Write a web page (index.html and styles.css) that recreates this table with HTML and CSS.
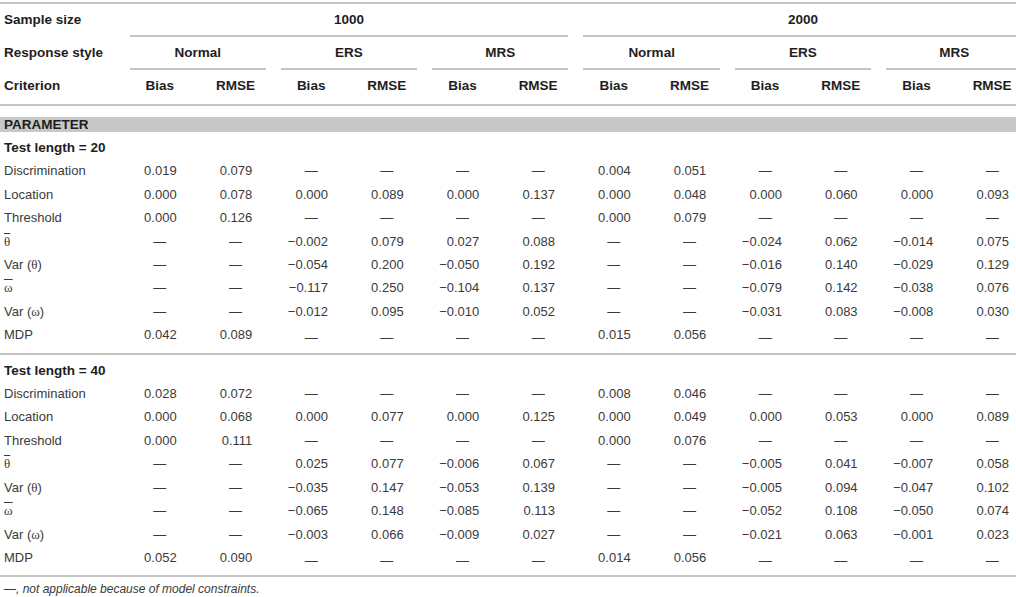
FILE: index.html
```html
<!DOCTYPE html>
<html>
<head>
<meta charset="utf-8">
<link rel="stylesheet" href="styles.css">
</head>
<body>
<div class="wrap">
<table class="tbl">
<colgroup>
<col class="c-lab">
<col class="c"><col class="c"><col class="c"><col class="c"><col class="c"><col class="c">
<col class="c"><col class="c"><col class="c"><col class="c"><col class="c"><col class="c">
</colgroup>
<thead>
<tr class="h1">
<th class="lab">Sample size</th>
<th class="grp" colspan="6"><div class="ul">1000</div></th>
<th class="grp" colspan="6"><div class="ul">2000</div></th>
</tr>
<tr class="h2">
<th class="lab">Response style</th>
<th class="grp" colspan="2"><div class="ul">Normal</div></th>
<th class="grp" colspan="2"><div class="ul">ERS</div></th>
<th class="grp" colspan="2"><div class="ul">MRS</div></th>
<th class="grp" colspan="2"><div class="ul">Normal</div></th>
<th class="grp" colspan="2"><div class="ul">ERS</div></th>
<th class="grp" colspan="2"><div class="ul">MRS</div></th>
</tr>
<tr class="h3">
<th class="lab">Criterion</th>
<th>Bias</th><th>RMSE</th><th>Bias</th><th>RMSE</th><th>Bias</th><th>RMSE</th>
<th>Bias</th><th>RMSE</th><th>Bias</th><th>RMSE</th><th>Bias</th><th>RMSE</th>
</tr>
</thead>
<tbody>
<tr class="gap"><td colspan="13"></td></tr>
<tr class="band"><td colspan="13">PARAMETER</td></tr>
<tr class="sub"><td colspan="13">Test length = 20</td></tr>
<tr><td class="lab">Discrimination</td><td>0.019</td><td>0.079</td><td class="d">—</td><td class="d">—</td><td class="d">—</td><td class="d">—</td><td>0.004</td><td>0.051</td><td class="d">—</td><td class="d">—</td><td class="d">—</td><td class="d">—</td></tr>
<tr><td class="lab">Location</td><td>0.000</td><td>0.078</td><td>0.000</td><td>0.089</td><td>0.000</td><td>0.137</td><td>0.000</td><td>0.048</td><td>0.000</td><td>0.060</td><td>0.000</td><td>0.093</td></tr>
<tr><td class="lab">Threshold</td><td>0.000</td><td>0.126</td><td class="d">—</td><td class="d">—</td><td class="d">—</td><td class="d">—</td><td>0.000</td><td>0.079</td><td class="d">—</td><td class="d">—</td><td class="d">—</td><td class="d">—</td></tr>
<tr><td class="lab"><span class="gk bar">θ</span></td><td class="d">—</td><td class="d">—</td><td>−0.002</td><td>0.079</td><td>0.027</td><td>0.088</td><td class="d">—</td><td class="d">—</td><td>−0.024</td><td>0.062</td><td>−0.014</td><td>0.075</td></tr>
<tr><td class="lab">Var (<span class="gk">θ</span>)</td><td class="d">—</td><td class="d">—</td><td>−0.054</td><td>0.200</td><td>−0.050</td><td>0.192</td><td class="d">—</td><td class="d">—</td><td>−0.016</td><td>0.140</td><td>−0.029</td><td>0.129</td></tr>
<tr><td class="lab"><span class="gk bar">ω</span></td><td class="d">—</td><td class="d">—</td><td>−0.117</td><td>0.250</td><td>−0.104</td><td>0.137</td><td class="d">—</td><td class="d">—</td><td>−0.079</td><td>0.142</td><td>−0.038</td><td>0.076</td></tr>
<tr><td class="lab">Var (<span class="gk">ω</span>)</td><td class="d">—</td><td class="d">—</td><td>−0.012</td><td>0.095</td><td>−0.010</td><td>0.052</td><td class="d">—</td><td class="d">—</td><td>−0.031</td><td>0.083</td><td>−0.008</td><td>0.030</td></tr>
<tr class="last"><td class="lab">MDP</td><td>0.042</td><td>0.089</td><td class="d">—</td><td class="d">—</td><td class="d">—</td><td class="d">—</td><td>0.015</td><td>0.056</td><td class="d">—</td><td class="d">—</td><td class="d">—</td><td class="d">—</td></tr>
<tr class="sub"><td colspan="13">Test length = 40</td></tr>
<tr><td class="lab">Discrimination</td><td>0.028</td><td>0.072</td><td class="d">—</td><td class="d">—</td><td class="d">—</td><td class="d">—</td><td>0.008</td><td>0.046</td><td class="d">—</td><td class="d">—</td><td class="d">—</td><td class="d">—</td></tr>
<tr><td class="lab">Location</td><td>0.000</td><td>0.068</td><td>0.000</td><td>0.077</td><td>0.000</td><td>0.125</td><td>0.000</td><td>0.049</td><td>0.000</td><td>0.053</td><td>0.000</td><td>0.089</td></tr>
<tr><td class="lab">Threshold</td><td>0.000</td><td>0.111</td><td class="d">—</td><td class="d">—</td><td class="d">—</td><td class="d">—</td><td>0.000</td><td>0.076</td><td class="d">—</td><td class="d">—</td><td class="d">—</td><td class="d">—</td></tr>
<tr><td class="lab"><span class="gk bar">θ</span></td><td class="d">—</td><td class="d">—</td><td>0.025</td><td>0.077</td><td>−0.006</td><td>0.067</td><td class="d">—</td><td class="d">—</td><td>−0.005</td><td>0.041</td><td>−0.007</td><td>0.058</td></tr>
<tr><td class="lab">Var (<span class="gk">θ</span>)</td><td class="d">—</td><td class="d">—</td><td>−0.035</td><td>0.147</td><td>−0.053</td><td>0.139</td><td class="d">—</td><td class="d">—</td><td>−0.005</td><td>0.094</td><td>−0.047</td><td>0.102</td></tr>
<tr><td class="lab"><span class="gk bar">ω</span></td><td class="d">—</td><td class="d">—</td><td>−0.065</td><td>0.148</td><td>−0.085</td><td>0.113</td><td class="d">—</td><td class="d">—</td><td>−0.052</td><td>0.108</td><td>−0.050</td><td>0.074</td></tr>
<tr><td class="lab">Var (<span class="gk">ω</span>)</td><td class="d">—</td><td class="d">—</td><td>−0.003</td><td>0.066</td><td>−0.009</td><td>0.027</td><td class="d">—</td><td class="d">—</td><td>−0.021</td><td>0.063</td><td>−0.001</td><td>0.023</td></tr>
<tr class="last"><td class="lab">MDP</td><td>0.052</td><td>0.090</td><td class="d">—</td><td class="d">—</td><td class="d">—</td><td class="d">—</td><td>0.014</td><td>0.056</td><td class="d">—</td><td class="d">—</td><td class="d">—</td><td class="d">—</td></tr>
</tbody>
</table>
<p class="note">—, not applicable because of model constraints.</p>
</div>
</body>
</html>
```

FILE: styles.css
```css
html, body {
  margin: 0;
  padding: 0;
  overflow: hidden;
  background: #fff;
}
body {
  font-family: "Liberation Sans", Arial, sans-serif;
  font-size: 13px;
  color: #3a3a3a;
}
.wrap {
  width: 1016px;
  overflow: hidden;
  padding-top: 2px;
}
.tbl {
  border-collapse: collapse;
  table-layout: fixed;
  width: 1030px;
  border-top: 2px solid #c4c4c4;
}
.c-lab { width: 122px; }
.c { width: 75.67px; }

.tbl th {
  font-weight: bold;
  font-size: 13.5px;
  color: #1e1e1e;
  padding: 0;
  text-align: center;
  vertical-align: top;
  line-height: 31px;
}
.tbl th.lab {
  text-align: left;
  padding-left: 4px;
}
.tbl th.grp .ul {
  margin: 0 7.5px;
  border-bottom: 2px solid #c4c4c4;
}
.h1 th.lab, .h2 th.lab { padding-bottom: 2px; }
.h3 th {
  line-height: 32px;
  padding-bottom: 2px;
  border-bottom: 2px solid #c4c4c4;
}

.tbl td {
  padding: 0 21px 0 0;
  line-height: 23.4px;
  text-align: right;
  white-space: nowrap;
}
.tbl td.d {
  text-align: center;
  padding: 0;
}
.tbl td.lab {
  text-align: left;
  padding-left: 4px;
  padding-right: 0;
}
.gap td {
  height: 11px;
  line-height: 11px;
  padding: 0;
}
.band td {
  background: #c8c8c8;
  font-weight: bold;
  font-size: 13.5px;
  color: #1e1e1e;
  line-height: 15px;
  text-align: left;
  padding: 0 0 0 4px;
}
.sub td {
  font-weight: bold;
  font-size: 13.5px;
  color: #1e1e1e;
  text-align: left;
  padding: 4px 0 0 4px;
}
.last td {
  padding-bottom: 6px;
  border-bottom: 2px solid #c4c4c4;
}
.gk {
  font-family: "Liberation Serif", "Times New Roman", serif;
  font-size: 13px;
}
.bar {
  text-decoration: overline;
}
.note {
  margin: 5px 0 0 4px;
  font-size: 12px;
  font-style: italic;
  color: #3a3a3a;
  line-height: 14px;
}
```
